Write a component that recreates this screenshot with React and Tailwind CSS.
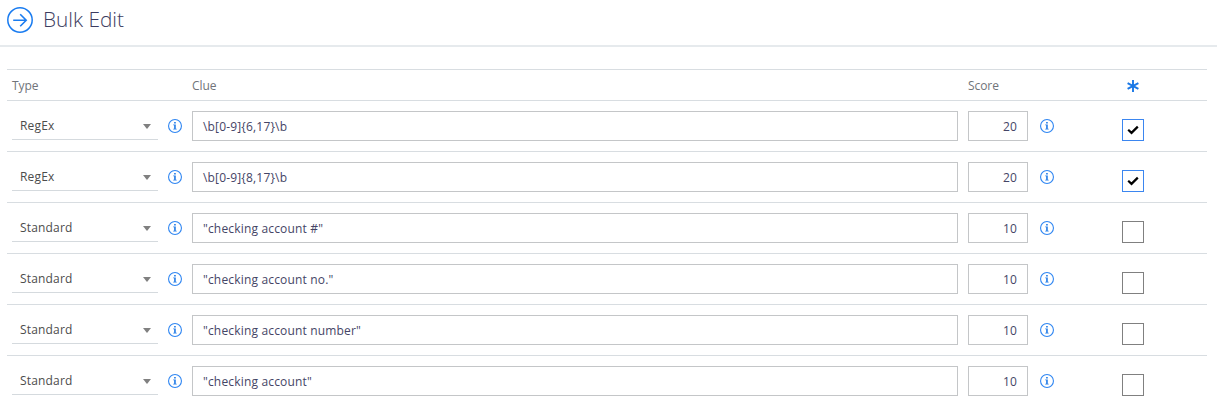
const rows = [
  { type: "RegEx", clue: "\\b[0-9]{6,17}\\b", score: 20, required: true },
  { type: "RegEx", clue: "\\b[0-9]{8,17}\\b", score: 20, required: true },
  { type: "Standard", clue: '"checking account #"', score: 10, required: false },
  { type: "Standard", clue: '"checking account no."', score: 10, required: false },
  { type: "Standard", clue: '"checking account number"', score: 10, required: false },
  { type: "Standard", clue: '"checking account"', score: 10, required: false },
];

function InfoIcon() {
  return (
    <svg className="mt-[18px] block size-[14px] shrink-0" viewBox="0 0 14 14" fill="none">
      <circle cx="7" cy="7" r="6.45" stroke="#2f86f2" strokeWidth="1.1" />
      <path d="M6.1 3h1.7v1.4H6.1zM5.2 5.4h2.6v4.3h.9v.9H5.2v-.9h.9V6.3h-.9z" fill="#2a80e8" />
    </svg>
  );
}

function Row({ row }) {
  return (
    <div className="flex h-[51px] shrink-0 items-start border-b border-[#d8dde1] pl-[5px]">
      <div className="flex h-[39px] w-[146px] shrink-0 justify-between border-b border-[#d5dade] pr-[7px] pl-2">
        <span className="mt-4 leading-[18px] text-[#4c4c4c]">{row.type}</span>
        <svg className="mt-[23px] block h-[5px] w-2" viewBox="0 0 8 5">
          <path d="M0 0h8L4 5z" fill="#808080" />
        </svg>
      </div>
      <div className="ml-[10px] flex">
        <InfoIcon />
      </div>
      <div className="mt-[10px] ml-[10px] flex h-[30px] w-[766px] items-center border border-[#c4c6c8] px-[10px] pt-[2px] text-[#454566]">
        {row.clue}
      </div>
      <div className="mt-[10px] ml-[10px] flex h-[30px] w-[60px] items-center justify-end border border-[#c4c6c8] px-[10px] pt-[2px] text-[#454566]">
        {row.score}
      </div>
      <div className="ml-3 flex">
        <InfoIcon />
      </div>
      <div
        className={
          row.required
            ? "mt-[18px] ml-[68px] flex size-[22px] items-center justify-center border border-[#3b86f0]"
            : "mt-[18px] ml-[68px] size-[22px] border border-[#808080]"
        }
      >
        {row.required && (
          <svg className="block h-[10px] w-3" viewBox="0 0 12 10" fill="none">
            <path d="M1.2 4.8L4.5 7.9L10.8 1.6" stroke="#000" strokeWidth="2.2" />
          </svg>
        )}
      </div>
    </div>
  );
}

export default function App() {
  return (
    <div className="flex h-[403px] w-[1217px] flex-col overflow-hidden bg-white font-['Open_Sans',sans-serif] text-[12px] tracking-[0.17px]">
      <header className="flex h-[47px] shrink-0 items-start border-b-2 border-[#e6eaed] pl-[7px]">
        <svg className="mt-[7px] block size-[26px]" viewBox="0 0 26 26" fill="none" stroke="#1a7cf0">
          <circle cx="13" cy="13" r="12.2" strokeWidth="1.5" />
          <path d="M6.2 13.3h12.6M13.2 7.3l6 6l-6 6" strokeWidth="1.6" />
        </svg>
        <h1 className="mt-[5px] ml-[10px] text-[20.8px] leading-[28px] font-light tracking-normal text-[#3c3c60]">Bulk Edit</h1>
      </header>
      <main className="mt-[22px] mr-[10px] ml-[7px] flex shrink-0 flex-col">
        <div className="flex h-8 shrink-0 items-center border-y border-[#d8dde1] pt-[2px] pl-[5px] tracking-[-0.08px] text-[#70747a]">
          <span className="w-[180px]">Type</span>
          <span className="w-[776px]">Clue</span>
          <span className="w-[159px]">Score</span>
          <svg className="mb-px block size-3" viewBox="0 0 12 12" fill="none">
            <path d="M6 0v12M.6 3.1l10.8 5.8M.6 8.9l10.8-5.8" stroke="#1a78e6" strokeWidth="1.9" />
          </svg>
        </div>
        {rows.map((row) => (
          <Row key={row.clue} row={row} />
        ))}
      </main>
    </div>
  );
}
